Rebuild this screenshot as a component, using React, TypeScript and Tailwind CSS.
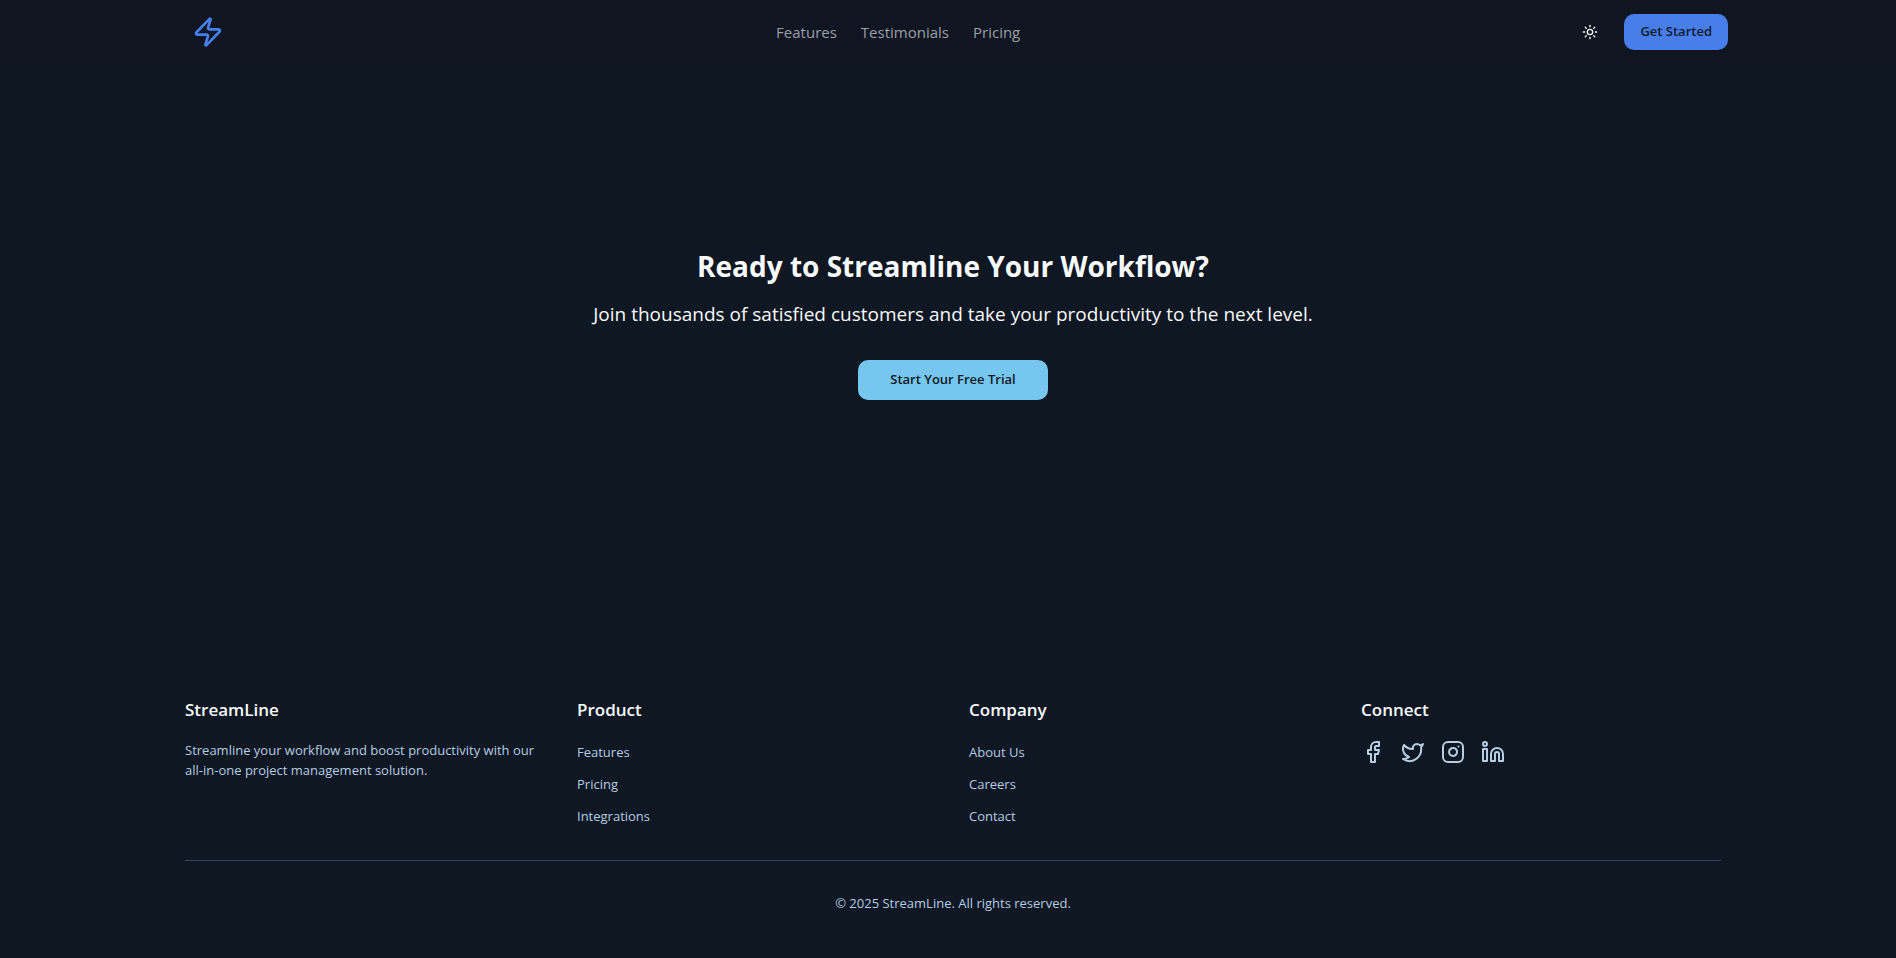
import React from "react";
import { Facebook, Instagram, Linkedin, Sun, Twitter, Zap } from "lucide-react";

const navLinks = ["Features", "Testimonials", "Pricing"];

const linkGroups = [
  { title: "Product", links: ["Features", "Pricing", "Integrations"] },
  { title: "Company", links: ["About Us", "Careers", "Contact"] },
];

const socials = [
  { name: "Facebook", Icon: Facebook },
  { name: "Twitter", Icon: Twitter },
  { name: "Instagram", Icon: Instagram },
  { name: "LinkedIn", Icon: Linkedin },
];

function Header() {
  return (
    <header className="bg-[#0f1521] pl-6">
      <div className="mx-auto flex h-16 max-w-[1536px] items-center justify-between">
        <a href="#" aria-label="StreamLine home">
          <Zap className="size-8 text-[#477eeb]" />
        </a>
        <nav className="flex gap-6 text-[15px] leading-6 text-[#9c9fa5]">
          {navLinks.map((label) => (
            <a key={label} href={`#${label.toLowerCase()}`}>{label}</a>
          ))}
        </nav>
        <div className="flex items-center gap-4">
          <button type="button" aria-label="Toggle theme" className="flex size-9 items-center justify-center rounded-lg text-[#f8fafc]">
            <Sun className="size-4" />
          </button>
          <button type="button" className="h-9 rounded-[10px] bg-[#477eeb] px-4 text-[13px] font-semibold text-[#111a2c]">
            Get Started
          </button>
        </div>
      </div>
    </header>
  );
}

function CallToAction() {
  return (
    <main className="flex flex-1 flex-col items-center justify-center pb-16 pl-2.5 text-center text-[#f8fafc]">
      <h2 className="mb-4 text-[28px] leading-9 font-bold">Ready to Streamline Your Workflow?</h2>
      <p className="mb-8 text-[19px] leading-7">
        Join thousands of satisfied customers and take your productivity to the next level.
      </p>
      <button type="button" className="h-10 rounded-[10px] bg-[#76c7f0] px-8 text-[13px] font-semibold text-[#0f1722]">
        Start Your Free Trial
      </button>
    </main>
  );
}

function FooterTitle({ children }: { children: React.ReactNode }) {
  return <h3 className="mb-4 text-[17px] leading-7 font-semibold text-[#f8fafc]">{children}</h3>;
}

function Footer() {
  return (
    <footer className="pt-12 pb-[45px] pl-2.5 text-[13px] leading-5 text-[#b5cce2]">
      <div className="mx-auto max-w-[1536px]">
        <div className="grid grid-cols-4 gap-8">
          <div>
            <FooterTitle>StreamLine</FooterTitle>
            <p>Streamline your workflow and boost productivity with our all-in-one project management solution.</p>
          </div>
          {linkGroups.map(({ title, links }) => (
            <div key={title}>
              <FooterTitle>{title}</FooterTitle>
              <ul className="space-y-2 leading-6">
                {links.map((label) => (
                  <li key={label}><a href="#">{label}</a></li>
                ))}
              </ul>
            </div>
          ))}
          <div>
            <FooterTitle>Connect</FooterTitle>
            <div className="flex gap-4">
              {socials.map(({ name, Icon }) => (
                <a key={name} href="#" aria-label={name}><Icon className="size-6" /></a>
              ))}
            </div>
          </div>
        </div>
        <p className="mt-8 border-t border-[#334466] pt-8 text-center">© 2025 StreamLine. All rights reserved.</p>
      </div>
    </footer>
  );
}

export default function App() {
  return (
    <div className="flex min-h-screen flex-col bg-[#0f1722] font-['Open_Sans','Noto_Sans',sans-serif]">
      <Header />
      <CallToAction />
      <Footer />
    </div>
  );
}
